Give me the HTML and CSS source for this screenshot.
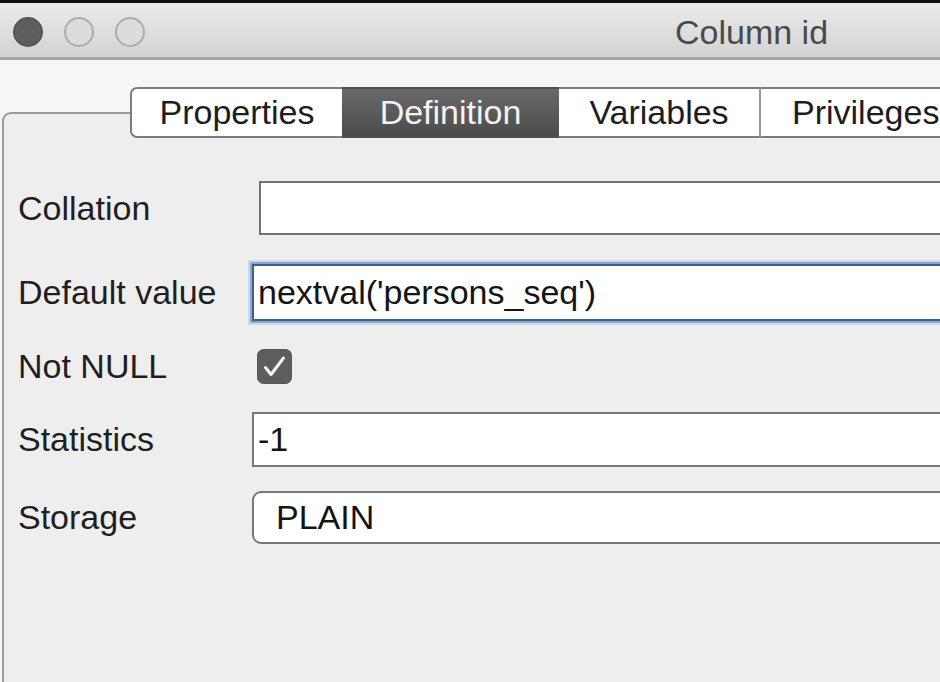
FILE: index.html
```html
<!DOCTYPE html>
<html lang="en">
<head>
<meta charset="utf-8">
<title>Column id</title>
<link rel="stylesheet" href="styles.css">
</head>
<body>
<div class="window">
  <div class="titlebar">
    <span class="light light-close"></span>
    <span class="light"></span>
    <span class="light"></span>
    <div class="title">Column id</div>
  </div>
  <div class="content">
    <div class="panel">
      <div class="tabs">
        <div class="tab tab-props">Properties</div>
        <div class="tab tab-active">Definition</div>
        <div class="tab tab-vars">Variables</div>
        <div class="tab tab-priv">Privileges</div>
      </div>
      <div class="form">
        <div class="row row-collation">
          <div class="label">Collation</div>
          <div class="field field-collation"></div>
        </div>
        <div class="row row-default">
          <div class="label">Default value</div>
          <div class="field field-focus">nextval('persons_seq')</div>
        </div>
        <div class="row row-notnull">
          <div class="label">Not NULL</div>
          <svg class="checkbox" width="35" height="35" viewBox="0 0 35 35">
            <rect x="0.5" y="0.5" width="34" height="34" rx="6" fill="#5d5d5d" stroke="#565656"/>
            <polyline points="8.5,18.5 14,25.5 26.5,9" fill="none" stroke="#f4f4f4" stroke-width="3" stroke-linecap="round" stroke-linejoin="round"/>
          </svg>
        </div>
        <div class="row row-stats">
          <div class="label">Statistics</div>
          <div class="field">-1</div>
        </div>
        <div class="row row-storage">
          <div class="label">Storage</div>
          <div class="field field-popup">PLAIN</div>
        </div>
      </div>
    </div>
  </div>
</div>
</body>
</html>
```

FILE: styles.css
```css
html, body {
  margin: 0;
  padding: 0;
  overflow: hidden;
  background: #eeeeee;
  font-family: "Liberation Sans", Arial, sans-serif;
}

.window {
  width: 940px;
  height: 682px;
  overflow: hidden;
  box-sizing: border-box;
  border-top: 3px solid #111111;
  display: flex;
  flex-direction: column;
}

.titlebar {
  flex: none;
  height: 57px;
  box-sizing: border-box;
  padding: 4px 0 0 13px;
  display: flex;
  align-items: center;
  background: linear-gradient(#ebebeb, #d3d3d3);
  border-bottom: 3px solid #a4a4a4;
}

.light {
  flex: none;
  width: 30px;
  height: 30px;
  box-sizing: border-box;
  border-radius: 50%;
  border: 2px solid #acacac;
  background: #dcdcdc;
  margin-right: 21px;
}

.light-close {
  background: #5e5e5e;
  border-color: #565656;
}

.title {
  margin-left: 509px;
  font-size: 34px;
  color: #4a4a4a;
  white-space: nowrap;
}

.content {
  flex: 1;
  box-sizing: border-box;
  background: #f6f6f6;
  padding: 52px 0 0 2px;
  display: flex;
  flex-direction: column;
}

.panel {
  flex: 1;
  width: 1200px;
  background: #eeeeee;
  border-top: 2px solid #9a9a9a;
  border-left: 2px solid #9a9a9a;
  border-top-left-radius: 9px;
}

.tabs {
  display: flex;
  height: 51px;
  margin-top: -27px;
  margin-left: 126px;
}

.tab {
  flex: none;
  box-sizing: border-box;
  height: 51px;
  display: flex;
  align-items: center;
  justify-content: center;
  background: #ffffff;
  border-top: 2px solid #7c7c7c;
  border-bottom: 2px solid #7c7c7c;
  font-size: 34px;
  color: #1d1d1d;
  white-space: nowrap;
}

.tab-props {
  width: 212px;
  border-left: 2px solid #7c7c7c;
  border-radius: 7px 0 0 7px;
}

.tab-active {
  width: 217px;
  background: linear-gradient(#6a6a6a, #4b4b4b);
  border-color: #505050;
  color: #f3f3f3;
}

.tab-vars {
  width: 202px;
  border-right: 2px solid #9a9a9a;
}

.tab-priv {
  width: 240px;
  justify-content: flex-start;
  padding-left: 31px;
}

.form {
  padding: 43px 0 0 14px;
  display: flex;
  flex-direction: column;
}

.row {
  display: flex;
  align-items: center;
}

.label {
  flex: none;
  width: 234px;
  font-size: 34px;
  color: #1f1f1f;
  white-space: nowrap;
}

.field {
  flex: 1;
  box-sizing: border-box;
  height: 100%;
  display: flex;
  align-items: center;
  padding-left: 4px;
  background: #ffffff;
  border: 2px solid #777777;
  font-size: 34px;
  color: #141414;
  white-space: nowrap;
}

.row-collation { height: 54px; }
.row-default { height: 57px; margin-top: 29px; }
.row-notnull { height: 35px; margin-top: 28px; }
.row-stats { height: 55px; margin-top: 28px; }
.row-storage { height: 53px; margin-top: 24px; }

.field-collation {
  margin-left: 7px;
  border-color: #727272;
}

.field-focus {
  border-color: #3e5f88;
  box-shadow: 0 0 0 2px #88a9d0, 0 0 0 4px rgba(160, 190, 225, 0.45);
}

.field-popup {
  border-radius: 9px;
  padding-left: 22px;
}

.checkbox {
  flex: none;
  margin-left: 5px;
}
```
